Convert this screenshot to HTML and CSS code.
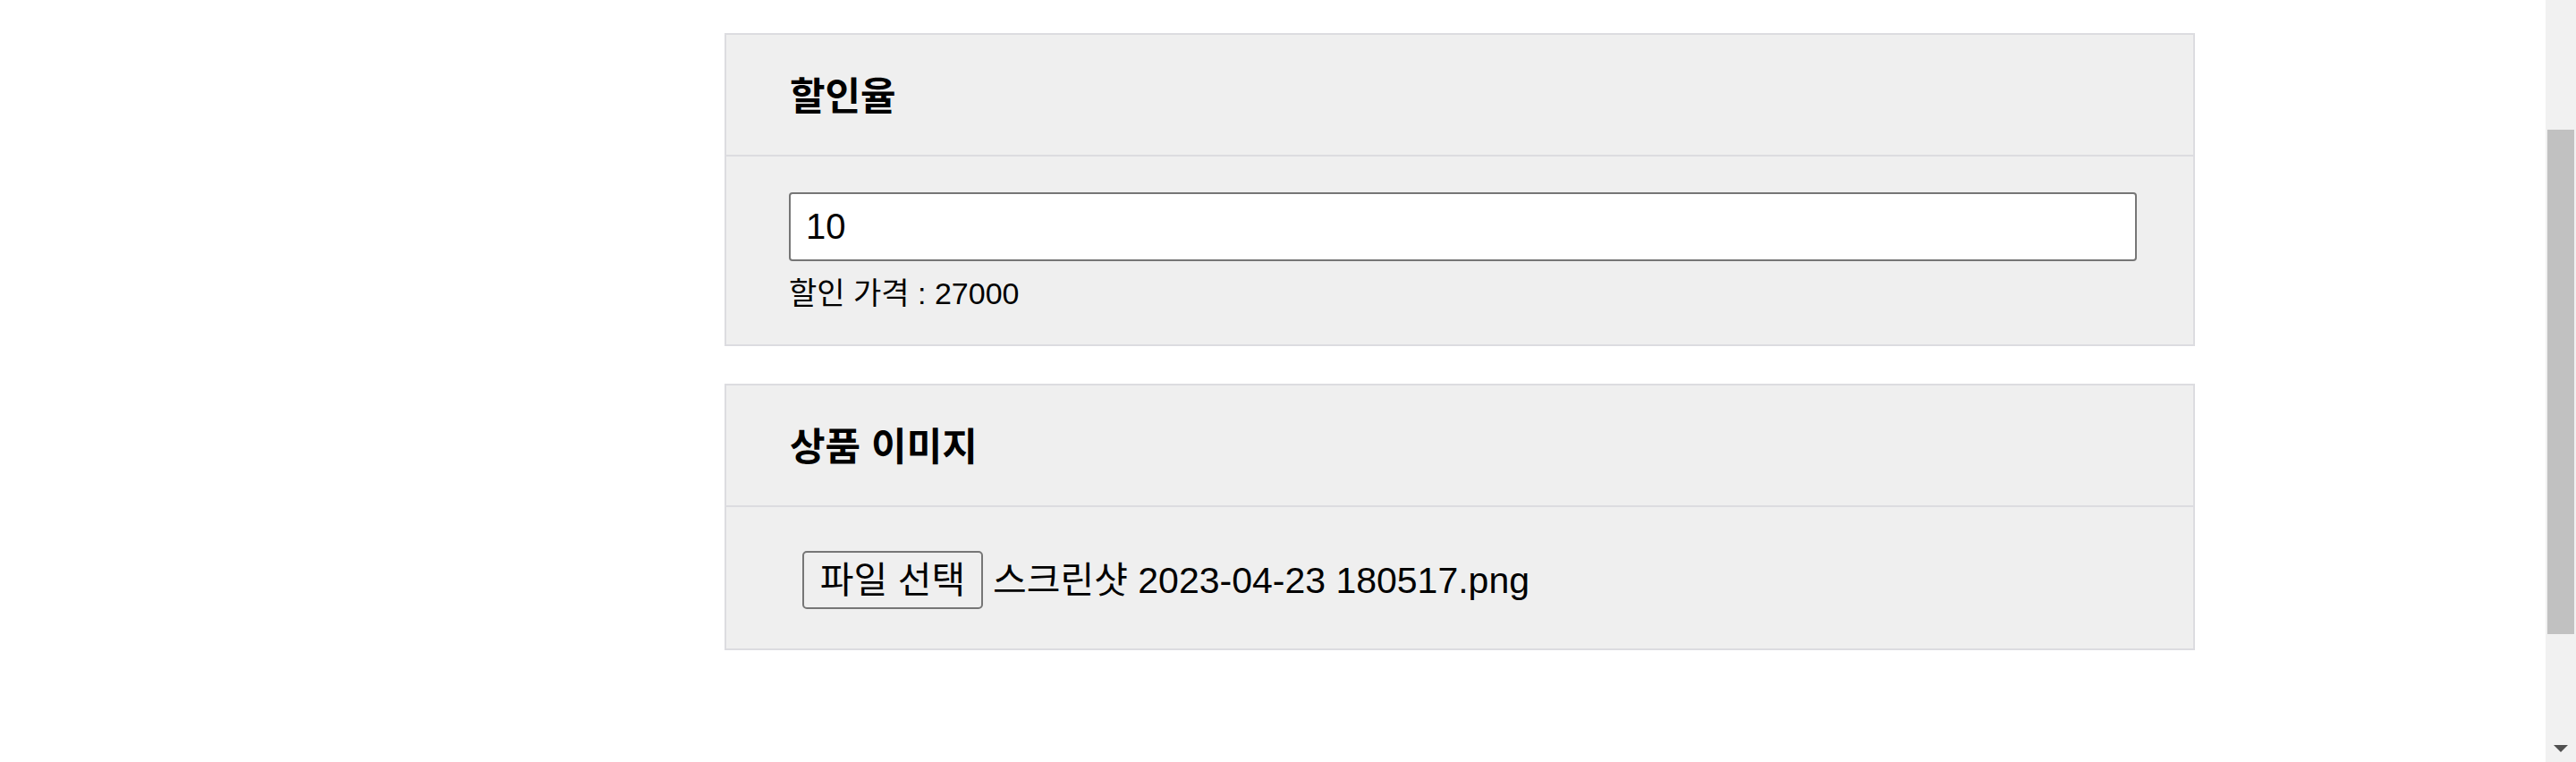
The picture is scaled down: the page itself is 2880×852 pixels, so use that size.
FILE: index.html
```html
<!DOCTYPE html>
<html lang="ko">
<head>
<meta charset="utf-8">
<title>상품 등록</title>
<link rel="stylesheet" href="styles.css">
</head>
<body>
<main class="page">
  <section class="card">
    <div class="card-header"><h5 class="card-title">할인율</h5></div>
    <div class="card-body">
      <div class="input-box">10</div>
      <p class="hint">할인 가격 : 27000</p>
    </div>
  </section>
  <section class="card">
    <div class="card-header"><h5 class="card-title">상품 이미지</h5></div>
    <div class="card-body file-body">
      <div class="file-row">
        <button class="file-btn" type="button">파일 선택</button>
        <span class="file-name">스크린샷 2023-04-23 180517.png</span>
      </div>
    </div>
  </section>
</main>
<div class="scrollbar">
  <div class="thumb"></div>
  <div class="arrow-down"></div>
</div>
</body>
</html>
```

FILE: styles.css
```css
html, body {
  margin: 0;
  padding: 0;
  overflow: hidden;
  height: 852px;
  background: #ffffff;
}
body {
  font-family: "Liberation Sans", "Noto Sans CJK KR", Arial, sans-serif;
  color: #000;
}
.page {
  width: 1644px;
  margin-left: 810px;
  padding-top: 37px;
  display: flex;
  flex-direction: column;
  gap: 42px;
}
.card {
  box-sizing: border-box;
  border: 2px solid #dcdce0;
  background: #efefef;
}
.card-header {
  box-sizing: border-box;
  height: 136px;
  border-bottom: 2px solid #dcdce0;
  padding-left: 71px;
  display: flex;
  align-items: center;
}
.card-title {
  margin: 0;
  font-size: 43px;
  line-height: 48px;
  font-weight: 700;
  padding-top: 4px;
}
.card-body {
  box-sizing: border-box;
  height: 210px;
  padding: 40px 63px 0 70px;
}
.input-box {
  box-sizing: border-box;
  height: 77px;
  border: 2px solid #767676;
  border-radius: 4px;
  background: #fff;
  font-size: 40px;
  line-height: 73px;
  padding-left: 17px;
}
.hint {
  margin: 16px 0 0 0;
  font-size: 34px;
  line-height: 40px;
}
.file-body {
  height: 158px;
  padding-top: 49px;
}
.file-row {
  display: flex;
  align-items: center;
  margin-left: 15px;
}
.file-btn {
  box-sizing: border-box;
  width: 202px;
  height: 65px;
  border: 2px solid #767676;
  border-radius: 5px;
  background: #efefef;
  font-family: "Liberation Sans", "Noto Sans CJK KR", sans-serif;
  font-size: 41px;
  line-height: 1;
  color: #000;
  padding: 2px 0 0 0;
  margin: 0 11px 0 0;
}
.file-name {
  font-size: 41px;
  line-height: 48px;
}
.scrollbar {
  position: fixed;
  top: 0;
  right: 0;
  width: 34px;
  height: 852px;
  background: #f1f1f1;
}
.thumb {
  position: absolute;
  left: 2px;
  top: 145px;
  width: 30px;
  height: 564px;
  background: #c1c1c1;
}
.arrow-down {
  position: absolute;
  left: 9px;
  top: 833px;
  width: 0;
  height: 0;
  border-left: 8px solid transparent;
  border-right: 8px solid transparent;
  border-top: 8px solid #505050;
}
```
